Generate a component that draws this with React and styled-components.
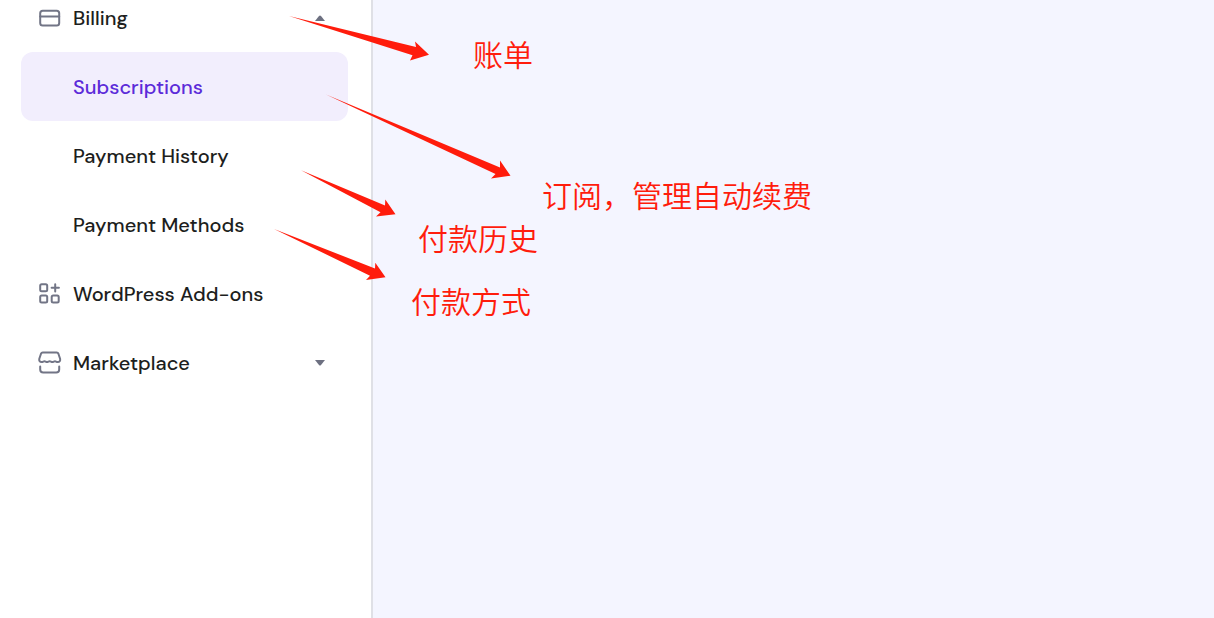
import React from 'react';
import styled, { createGlobalStyle } from 'styled-components';

const GlobalStyle = createGlobalStyle`
    * {
        box-sizing: border-box;
    }

    body {
        margin: 0;
        background: #f4f5ff;
        font-family: 'DM Sans', Inter, 'Noto Sans CJK SC', sans-serif;
    }
`;

const Page = styled.div`
    position: relative;
    display: flex;
    min-height: 100vh;
    overflow: hidden;
`;

const Sidebar = styled.aside`
    flex: 0 0 373px;
    padding: 0 23px 0 21px;
    background: #fff;
    border-right: 2px solid #dfe0e6;
`;

const Content = styled.main`
    flex: 1;
    background: #f4f5ff;
`;

/* The list is scrolled a little, so its first row is cut at the top. */
const NavList = styled.ul`
    list-style: none;
    margin: -17px 0 0 0;
    padding: 0;
`;

const NavItem = styled.a`
    display: flex;
    align-items: center;
    gap: 10px;
    width: 100%;
    height: 69px;
    padding: 0 22px 0 16px;
    border: 0;
    border-radius: 12px;
    background: ${props => (props.$active ? '#f2eefd' : 'transparent')};
    color: ${props => (props.$active ? '#5c2bd9' : '#1d1e20')};
    font-family: inherit;
    font-size: 20px;
    font-weight: 500;
    text-align: left;
    text-decoration: none;
    cursor: pointer;
`;

const NavIcon = styled.svg`
    flex: none;
    width: 26px;
    height: 26px;
    fill: none;
    stroke: #727586;
    stroke-width: 2;
    stroke-linecap: round;
    stroke-linejoin: round;
`;

const NavLabel = styled.span`
    flex: 1;
`;

const Caret = styled.svg`
    width: 12px;
    height: 6px;
    fill: #6d7081;
`;

const Arrows = styled.svg`
    position: absolute;
    top: 0;
    left: 0;
    width: 520px;
    height: 300px;
    fill: #ff1c0c;
    pointer-events: none;
`;

const Note = styled.span`
    position: absolute;
    top: ${props => props.$top}px;
    left: ${props => props.$left}px;
    color: #ff1c0c;
    font-family: 'Noto Sans CJK SC DemiLight', 'Noto Sans CJK SC', sans-serif;
    font-size: 30px;
    font-weight: 350;
    line-height: 40px;
    white-space: nowrap;
`;

const icons = {
    card: (
        <>
            <rect x="3.2" y="5.8" width="19" height="14.6" rx="2.5" />
            <path d="M3.200 11.500h19" />
        </>
    ),
    addons: (
        <>
            <rect x="3.2" y="3.2" width="7" height="7" rx="1.5" />
            <rect x="3.2" y="14.5" width="7" height="7" rx="1.5" />
            <rect x="14.7" y="14.5" width="7" height="7" rx="1.5" />
            <path d="M18.200 3.200v7.300M14.600 6.800h7.300" />
        </>
    ),
    store: (
        <>
            <path d="M5.700 2.500h14c.8 0 1.400.4 1.700 1.200l1.700 5c.5 2-.6 3.400-2.300 3.400-1.400 0-2-.8-2.800-.8s-1.700.8-2.700.8-1.700-.8-2.600-.8-1.700.8-2.700.8-1.700-.8-2.600-.8-1.400.8-2.800.8c-1.700 0-2.800-1.400-2.300-3.400l1.700-5c.3-.8.9-1.200 1.700-1.200z" />
            <path d="M3.200 16.500v3c0 2 1 3 3 3h13c2 0 3-1 3-3v-3" />
        </>
    ),
};

const items = [
    { label: 'Billing', icon: 'card', open: true },
    { label: 'Subscriptions', active: true },
    { label: 'Payment History' },
    { label: 'Payment Methods' },
    { label: 'WordPress Add-ons', icon: 'addons' },
    { label: 'Marketplace', icon: 'store', open: false },
];

const arrows = [
    '289,16 416,47 415,41.500 429,54.700 410,60.500 412.500,55.200',
    '326,94.500 500,167.500 500,160.500 510.500,175.700 491,178.500 495.500,174',
    '301,170.300 385,205.500 385.300,199.500 395.500,214.300 376,216.500 380.500,212.300',
    '274,229 375,268.500 375.300,262.800 385.500,277.300 366,280 370,275.700',
];

const notes = [
    { text: '账单', top: 33, left: 473 },
    { text: '订阅，管理自动续费', top: 174, left: 542 },
    { text: '付款历史', top: 217, left: 418 },
    { text: '付款方式', top: 280, left: 411 },
];

const NavRow = ({ label, icon, active, open }) => {
    const expandable = open !== undefined;
    const link = expandable
        ? { as: 'button', type: 'button', 'aria-expanded': open }
        : { href: '#', 'aria-current': active ? 'page' : undefined };

    return (
        <li>
            <NavItem $active={active} {...link}>
                <NavIcon viewBox="0 0 26 26" aria-hidden="true">{icons[icon]}</NavIcon>
                <NavLabel>{label}</NavLabel>
                {expandable && (
                    <Caret viewBox="0 0 12 6" aria-hidden="true">
                        <path d={open ? 'M1 6h10L7 1Q6 0 5 1z' : 'M1 0h10L7 5Q6 6 5 5z'} />
                    </Caret>
                )}
            </NavItem>
        </li>
    );
};

const App = () => (
    <Page>
        <GlobalStyle />
        <Sidebar>
            <nav>
                <NavList>
                    {items.map(item => <NavRow key={item.label} {...item} />)}
                </NavList>
            </nav>
        </Sidebar>
        <Content />
        <Arrows viewBox="0 0 520 300" aria-hidden="true">
            {arrows.map(points => <polygon key={points} points={points} />)}
        </Arrows>
        {notes.map(({ text, top, left }) => (
            <Note key={text} $top={top} $left={left}>{text}</Note>
        ))}
    </Page>
);

export default App;
